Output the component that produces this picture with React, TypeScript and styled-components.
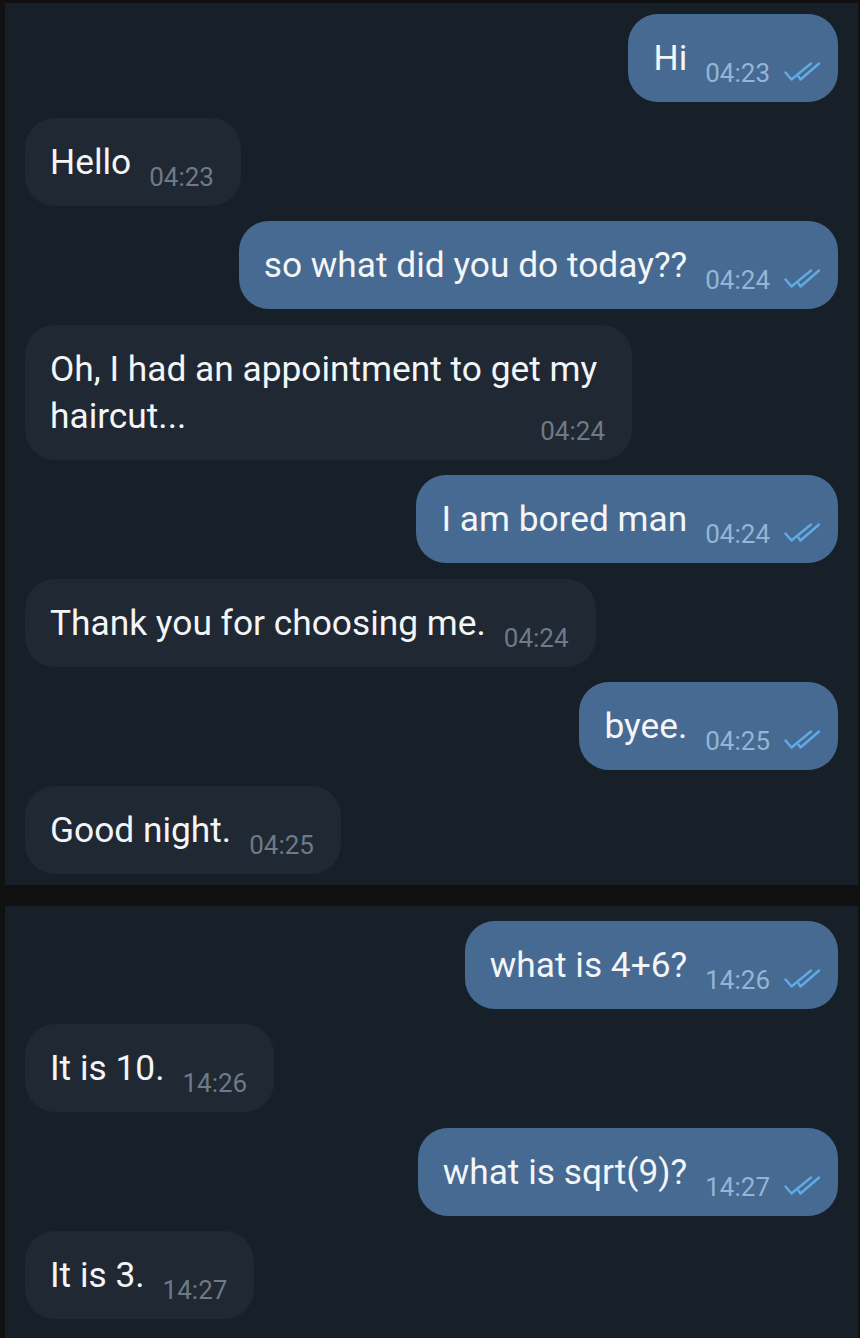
import React from "react";
import styled, { createGlobalStyle } from "styled-components";

const GlobalStyle = createGlobalStyle`
  html, body {
    margin: 0;
    padding: 0;
    background: #111111;
  }
  body {
    font-family: Roboto, "Noto Sans", "Liberation Sans", sans-serif;
    -webkit-font-smoothing: antialiased;
  }
`;

type Side = "in" | "out";
type Message = { side: Side; text: string; time: string };

const screens: Message[][] = [
  [
    { side: "out", text: "Hi", time: "04:23" },
    { side: "in", text: "Hello", time: "04:23" },
    { side: "out", text: "so what did you do today??", time: "04:24" },
    { side: "in", text: "Oh, I had an appointment to get my haircut...", time: "04:24" },
    { side: "out", text: "I am bored man", time: "04:24" },
    { side: "in", text: "Thank you for choosing me.", time: "04:24" },
    { side: "out", text: "byee.", time: "04:25" },
    { side: "in", text: "Good night.", time: "04:25" },
  ],
  [
    { side: "out", text: "what is 4+6?", time: "14:26" },
    { side: "in", text: "It is 10.", time: "14:26" },
    { side: "out", text: "what is sqrt(9)?", time: "14:27" },
    { side: "in", text: "It is 3.", time: "14:27" },
  ],
];

const Page = styled.div`
  min-height: 1338px;
  box-sizing: border-box;
  padding: 3px 2px 0 5px;
  display: flex;
  flex-direction: column;
  gap: 21px;
  background: #111111;
  overflow: hidden;
`;

const Panel = styled.section<{ $last?: boolean }>`
  background: #172029;
  display: flex;
  flex-direction: column;
  gap: 15.5px;
  padding: ${(p) => (p.$last ? "15px 20px 20px" : "11px 20px 11px")};
`;

const Row = styled.div<{ $side: Side }>`
  display: flex;
  justify-content: ${(p) => (p.$side === "out" ? "flex-end" : "flex-start")};
`;

const Bubble = styled.div<{ $side: Side }>`
  display: flow-root;
  max-width: 607px;
  box-sizing: border-box;
  padding: ${(p) => (p.$side === "out" ? "21px 18px 20px 25px" : "21px 27px 20px 25px")};
  border-radius: 30px;
  background: ${(p) => (p.$side === "out" ? "#466a92" : "#1f2833")};
  color: #f3f5f7;
  font-size: 35.3px;
  line-height: 47px;
`;

const Meta = styled.span<{ $side: Side }>`
  float: right;
  display: flex;
  align-items: center;
  height: 20px;
  margin: 28px 0 -10px 18px;
  font-size: 26px;
  line-height: 20px;
  color: ${(p) => (p.$side === "out" ? "#94b5d6" : "#6e7a87")};
`;

const Checks = styled.svg`
  width: 36px;
  height: 19px;
  margin-left: 14px;
  align-self: flex-start;
  margin-top: -1px;
`;

const DoubleCheck = () => (
  <Checks viewBox="0 0 36 19" fill="none">
    <path
      d="M1.5 10.5 L7.5 17.5 L27 1.5"
      stroke="#62aae6"
      strokeWidth="2.4"
      strokeLinecap="round"
      strokeLinejoin="round"
    />
    <path
      d="M14.5 14.5 L16.5 17.5 L35 1.5"
      stroke="#62aae6"
      strokeWidth="2.4"
      strokeLinecap="round"
      strokeLinejoin="round"
    />
  </Checks>
);

export default function App() {
  return (
    <>
      <GlobalStyle />
      <Page>
        {screens.map((msgs, i) => (
          <Panel key={i} $last={i === screens.length - 1}>
            {msgs.map((m, j) => (
              <Row key={j} $side={m.side}>
                <Bubble $side={m.side}>
                  {m.text}
                  <Meta $side={m.side}>
                    <span>{m.time}</span>
                    {m.side === "out" && <DoubleCheck />}
                  </Meta>
                </Bubble>
              </Row>
            ))}
          </Panel>
        ))}
      </Page>
    </>
  );
}
